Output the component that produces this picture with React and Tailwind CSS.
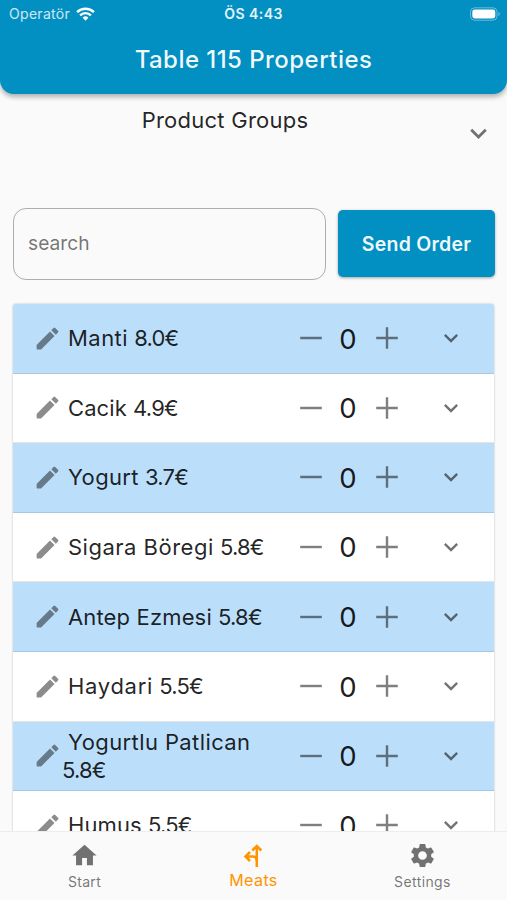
import { useState } from "react";

const initialProducts = [
  { id: 1, name: "Manti", price: "8.0", tracking: "tracking-[0.45px]" },
  { id: 2, name: "Cacik", price: "4.9", tracking: "tracking-[0.1px]" },
  { id: 3, name: "Yogurt", price: "3.7", tracking: "tracking-[0.35px]" },
  { id: 4, name: "Sigara Böregi", price: "5.8", tracking: "tracking-[0.5px]" },
  { id: 5, name: "Antep Ezmesi", price: "5.8", tracking: "tracking-[0.15px]" },
  { id: 6, name: "Haydari", price: "5.5", tracking: "tracking-[0.7px]" },
  { id: 7, name: "Yogurtlu Patlican", price: "5.8", tracking: "tracking-[0.4px]" },
  { id: 8, name: "Humus", price: "5.5", tracking: "tracking-[0.1px]" },
];

function Icon({ d, className }) {
  return (
    <svg className={className} viewBox="0 0 24 24" fill="currentColor">
      <path d={d} />
    </svg>
  );
}

const icons = {
  pencil: "M3 17.46v3.04c0 .28.22.5.5.5h3.04c.13 0 .26-.05.35-.15L17.81 9.94l-3.75-3.75L3.15 17.1c-.1.1-.15.22-.15.36zM20.71 7.04a1 1 0 0 0 0-1.41l-2.34-2.34a1 1 0 0 0-1.41 0l-1.83 1.83 3.75 3.75 1.83-1.83z",
  chevron: "M7.41 8.59 12 13.17l4.59-4.58L18 10l-6 6-6-6z",
  home: "M10 20v-6h4v6h5v-8h3L12 3 2 12h3v8z",
  gear: "M19.14 12.94c.04-.3.06-.61.06-.94 0-.32-.02-.64-.07-.94l2.03-1.58a.49.49 0 0 0 .12-.61l-1.92-3.32a.488.488 0 0 0-.59-.22l-2.39.96c-.5-.38-1.03-.7-1.62-.94l-.36-2.54a.484.484 0 0 0-.48-.41h-3.84c-.24 0-.43.17-.47.41l-.36 2.54c-.59.24-1.13.57-1.62.94l-2.39-.96c-.22-.08-.47 0-.59.22L2.74 8.87c-.12.21-.08.47.12.61l2.03 1.58c-.05.3-.09.63-.09.94s.02.64.07.94l-2.03 1.58a.49.49 0 0 0-.12.61l1.92 3.32c.12.22.37.29.59.22l2.39-.96c.5.38 1.03.7 1.62.94l.36 2.54c.05.24.24.41.48.41h3.84c.24 0 .44-.17.47-.41l.36-2.54c.59-.24 1.13-.56 1.62-.94l2.39.96c.22.08.47 0 .59-.22l1.92-3.32c.12-.22.07-.47-.12-.61l-2.01-1.58zM12 15.6c-1.98 0-3.6-1.62-3.6-3.6s1.62-3.6 3.6-3.6 3.6 1.62 3.6 3.6-1.62 3.6-3.6 3.6z",
};

function StatusBar() {
  return (
    <div className="grid grid-cols-3 items-center h-[27px] pl-[9px] pr-[7px]">
      <div className="flex items-center gap-[6px]">
        <span className="text-[14px] tracking-[0.3px] text-white/80">Operatör</span>
        <svg className="w-[19px] h-[14px] text-white" viewBox="0 0 19 14" fill="none" stroke="currentColor" strokeWidth="2.4">
          <path d="M1.1 5.2a12 12 0 0 1 16.8 0" />
          <path d="M4.1 8.3a7.7 7.7 0 0 1 10.8 0" />
          <path d="M9.5 13.8 6.6 10.7a4.2 4.2 0 0 1 5.8 0z" fill="currentColor" stroke="none" />
        </svg>
      </div>
      <span className="-ml-[2px] text-center text-[14px] font-semibold tracking-[0.45px] text-white/90">ÖS 4:43</span>
      <svg className="justify-self-end w-[31px] h-[14px]" viewBox="0 0 31 14" fill="none">
        <rect x="1.5" y="0.8" width="26.5" height="12.4" rx="4" stroke="white" strokeOpacity="0.4" />
        <rect x="3.3" y="2.5" width="23" height="9" rx="2.4" fill="white" />
        <path d="M29.5 5v4c1.6-.7 1.6-3.300 0-4z" fill="white" fillOpacity="0.45" />
      </svg>
    </div>
  );
}

function ProductRow({ product, striped, count, onChange }) {
  return (
    <div
      className={`flex items-center h-[69.6px] shrink-0 border-b border-black/10 pl-[20px] pr-[29px] ${
        striped ? "bg-[#bbdefb]" : "bg-white"
      }`}
    >
      <button className="w-[29px] shrink-0">
        <Icon d={icons.pencil} className="w-[29px] h-[29px] text-black/45" />
      </button>
      <p className="w-[230px] pr-[16px] text-[22px] leading-[28px] indent-[6px] text-black/87">
        <span className={product.tracking}>{product.name}</span>{" "}
        <span className="tracking-[-0.8px]">{product.price}€</span>
      </p>
      <button className="ml-[7px] w-[24px] h-[24px] text-black/50" onClick={() => onChange(-1)}>
        <svg viewBox="0 0 24 24" fill="none" stroke="currentColor" strokeWidth="2.4">
          <path d="M1.200 12h21.600" />
        </svg>
      </button>
      <span className="w-[52px] pt-[2px] pr-[2px] text-center text-[27.5px] text-black/90">{count}</span>
      <button className="w-[24px] h-[24px] text-black/50" onClick={() => onChange(1)}>
        <svg viewBox="0 0 24 24" fill="none" stroke="currentColor" strokeWidth="2.4">
          <path d="M1.200 12h21.600M12 1.200v21.600" />
        </svg>
      </button>
      <Icon d={icons.chevron} className="ml-auto w-[28px] h-[28px] text-black/55" />
    </div>
  );
}

export default function App() {
  const [counts, setCounts] = useState({});
  const [search, setSearch] = useState("");

  const products = initialProducts.filter((p) =>
    p.name.toLowerCase().includes(search.toLowerCase())
  );

  function changeCount(id, delta) {
    setCounts((prev) => ({ ...prev, [id]: Math.max(0, (prev[id] || 0) + delta) }));
  }

  return (
    <div className="flex flex-col w-full h-[900px] overflow-hidden bg-[#fafafa] font-['Inter',sans-serif]">

      <header className="h-[94px] shrink-0 bg-[#028fc1] rounded-b-[14px] shadow-[0_3px_5px_rgba(0,0,0,0.3)]">
        <StatusBar />
        <h1 className="mt-[15px] text-center text-[24px] leading-[36px] font-medium tracking-[0.45px] text-white/95">
          Table 115 Properties
        </h1>
      </header>

      <div className="flex justify-between h-[113px] shrink-0 pr-[12px]">
        <span className="flex-1 pr-[12px] mt-[10px] text-center text-[22px] leading-[32px] tracking-[0.25px] text-black/87">
          Product Groups
        </span>
        <Icon d={icons.chevron} className="mt-[23px] w-[33px] h-[33px] text-black/55" />
      </div>

      <div className="flex items-center gap-[12px] h-[73px] shrink-0 pl-[13px] pr-[12px]">
        <input
          value={search}
          onChange={(e) => setSearch(e.target.value)}
          placeholder="search"
          className="w-[313px] h-[72px] rounded-[13px] border-[1.5px] border-black/30 px-[14px] pb-[2px] text-[19.2px] placeholder-black/55 outline-none"
        />
        <button className="flex-1 h-[67px] rounded-[5px] bg-[#028fc1] pt-[2px] text-[19.5px] font-semibold tracking-[0.25px] text-white/95 shadow-[0_1px_3px_rgba(0,0,0,0.35)]">
          Send Order
        </button>
      </div>

      <main className="flex-1 min-h-0 overflow-hidden px-[12px] pt-[24px]">
        <div className="flex flex-col mx-px rounded-t-[3px] overflow-hidden shadow-[0_0_2px_rgba(0,0,0,0.3)]">
          {products.map((product, index) => (
            <ProductRow
              key={product.id}
              product={product}
              striped={index % 2 === 0}
              count={counts[product.id] || 0}
              onChange={(delta) => changeCount(product.id, delta)}
            />
          ))}
        </div>
      </main>

      <nav className="grid grid-cols-3 h-[69px] shrink-0 border-t border-black/5 bg-[#fafafa]">
        <button className="flex flex-col items-center pt-[9px] text-black/55">
          <Icon d={icons.home} className="w-[29px] h-[29px]" />
          <span className="mt-[2px] text-[14px] leading-[20px] tracking-[0.3px]">Start</span>
        </button>
        <button className="flex flex-col items-center pt-[9px] text-[#ff9400]">
          <svg className="w-[29px] h-[29px]" viewBox="0 0 29 29" fill="none" stroke="currentColor" strokeWidth="2.5">
            <path d="M17.800 26V5.500M13.300 9.500l4.500-4.500 4.500 4.500" />
            <path d="M17.800 20q0-4.500-4-4.500H7M11 11l-4.500 4.500L11 20" />
          </svg>
          <span className="text-[16px] leading-[20px] tracking-[0.4px]">Meats</span>
        </button>
        <button className="flex flex-col items-center pt-[9px] text-black/55">
          <Icon d={icons.gear} className="w-[29px] h-[29px]" />
          <span className="mt-[2px] text-[14px] leading-[20px] tracking-[0.4px]">Settings</span>
        </button>
      </nav>
    </div>
  );
}
